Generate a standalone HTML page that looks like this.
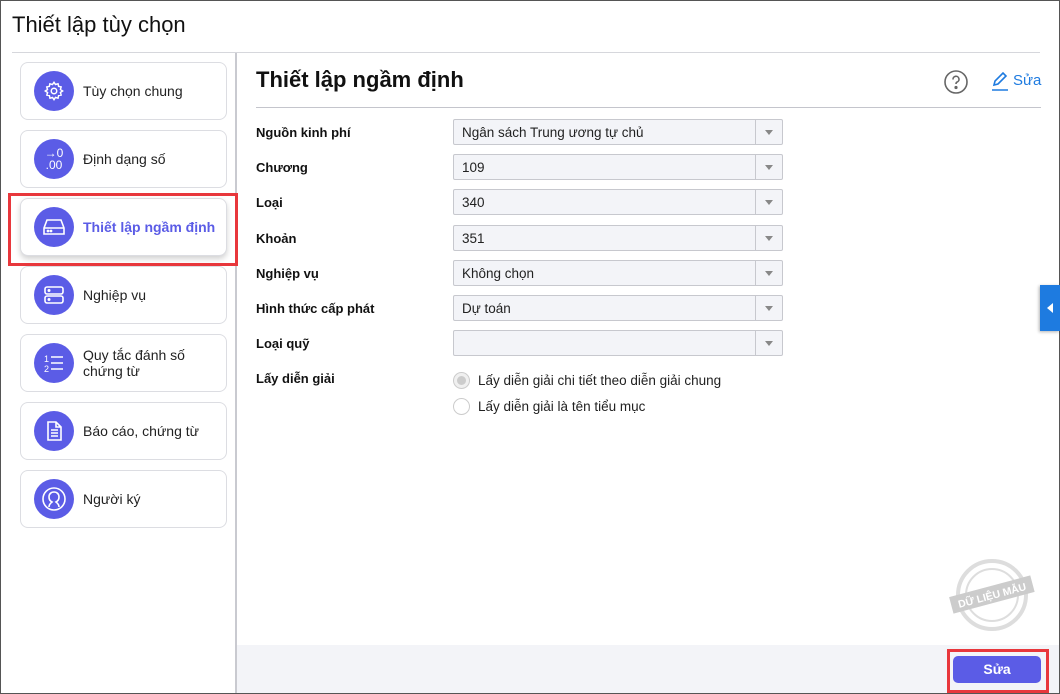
<!DOCTYPE html>
<html><head><meta charset="utf-8"><style>
*{box-sizing:border-box;margin:0;padding:0}
body{width:1060px;height:694px;overflow:hidden;background:#fff;font-family:"Liberation Sans",sans-serif;color:#111;position:relative}
.frame{position:absolute;left:0;top:0;width:1060px;height:694px;border:1px solid #555;}
.title{position:absolute;left:12px;top:12px;font-size:22px;color:#111}
.hl{position:absolute;left:12px;top:52px;width:1028px;height:1px;background:#d6d7dc}
.vl{position:absolute;left:235px;top:53px;width:2px;height:640px;background:#c9cad0}
.card{position:absolute;left:20px;width:207px;height:58px;border:1px solid #dcdde2;border-radius:8px;background:#fff;display:flex;align-items:center}
.ic{width:40px;height:40px;border-radius:50%;background:#5b5ce6;margin-left:13px;margin-right:9px;display:flex;align-items:center;justify-content:center;flex-shrink:0}
.card span{font-size:14px;color:#222;line-height:16px}
.sel{box-shadow:0 3px 6px rgba(0,0,0,.18)}
.sel span{color:#5b5ce6;font-weight:bold}
.red{position:absolute;border:3px solid #e8373c}
h1{position:absolute;left:256px;top:67px;font-size:22px;font-weight:bold}
.hl2{position:absolute;left:256px;top:107px;width:785px;height:1px;background:#c4c5cc}
.lab{position:absolute;left:256px;font-size:13px;font-weight:bold}
.sb{position:absolute;left:453px;width:330px;height:26px;border:1px solid #c7c8ce;background:#f3f4f8;border-radius:2px;font-size:13.5px;padding:5px 8px;color:#222}
.sb:after{content:"";position:absolute;right:0;top:0;width:26px;height:24px;border-left:1px solid #c7c8ce}
.sb:before{content:"";position:absolute;right:9px;top:10px;border-left:4px solid transparent;border-right:4px solid transparent;border-top:5px solid #888}
.rad{position:absolute;left:453px;width:17px;height:17px;border:1px solid #ccc;border-radius:50%;background:#fff}
.rt{position:absolute;left:478px;font-size:13.5px;color:#222}
.foot{position:absolute;left:237px;top:645px;width:822px;height:48px;background:#f3f4f8}
.btn{position:absolute;left:953px;top:656px;width:88px;height:27px;background:#5b5ce6;border-radius:5px;color:#fff;font-weight:bold;font-size:14px;text-align:center;line-height:27px}
</style></head><body>
<div class="frame"></div>
<div class="title">Thiết lập tùy chọn</div>
<div class="hl"></div>
<div class="vl"></div>

<div class="card" style="top:62px"><div class="ic"><svg width="22" height="22" viewBox="0 0 24 24" fill="none" stroke="#fff" stroke-width="1.6"><circle cx="12" cy="12" r="3"/><path d="M12 2.5l1.6 2.4 2.8-.8.6 2.8 2.8.6-.8 2.8 2.4 1.7-2.4 1.6.8 2.8-2.8.6-.6 2.8-2.8-.8L12 21.5l-1.6-2.4-2.8.8-.6-2.8-2.8-.6.8-2.8L2.5 12l2.4-1.6-.8-2.8 2.8-.6.6-2.8 2.8.8z"/></svg></div><span>Tùy chọn chung</span></div>
<div class="card" style="top:130px"><div class="ic" style="color:#fff;font-size:12px;line-height:12px;text-align:center;flex-direction:column"><div>→0</div><div>.00</div></div><span>Định dạng số</span></div>
<div class="card sel" style="top:198px"><div class="ic"><svg width="24" height="22" viewBox="0 0 24 22" fill="none" stroke="#fff" stroke-width="1.6"><path d="M5 4h14l3 8v6H2v-6z M2 12h20"/><circle cx="6" cy="15" r=".6" fill="#fff"/><circle cx="9" cy="15" r=".6" fill="#fff"/></svg></div><span>Thiết lập ngầm định</span></div>
<div class="card" style="top:266px"><div class="ic"><svg width="22" height="22" viewBox="0 0 22 22" fill="none" stroke="#fff" stroke-width="1.6"><rect x="2" y="3" width="18" height="7" rx="2"/><rect x="2" y="12" width="18" height="7" rx="2"/><circle cx="6" cy="6.5" r=".7" fill="#fff"/><circle cx="6" cy="15.5" r=".7" fill="#fff"/></svg></div><span>Nghiệp vụ</span></div>
<div class="card" style="top:334px"><div class="ic"><svg width="24" height="22" viewBox="0 0 24 22" fill="#fff" stroke="#fff"><text x="2" y="10" font-size="9" stroke="none" font-family="Liberation Sans">1</text><text x="2" y="20" font-size="9" stroke="none" font-family="Liberation Sans">2</text><path d="M9 5h12M9 11h12M9 17h12" stroke-width="1.6"/></svg></div><span>Quy tắc đánh số<br>chứng từ</span></div>
<div class="card" style="top:402px"><div class="ic"><svg width="20" height="22" viewBox="0 0 20 22" fill="none" stroke="#fff" stroke-width="1.6"><path d="M4 2h8l5 5v13H4z M12 2v5h5 M7 10h7M7 13h7M7 16h7"/></svg></div><span>Báo cáo, chứng từ</span></div>
<div class="card" style="top:470px"><div class="ic"><svg width="26" height="26" viewBox="0 0 26 26" fill="none" stroke="#fff" stroke-width="1.6"><circle cx="13" cy="13" r="11"/><path d="M8 21c0-3 2-4 3-5-2-1-3-3-3-5 0-3 2-5 5-5s5 2 5 5c0 2-1 4-3 5 1 1 3 2 3 5"/></svg></div><span>Người ký</span></div>
<div class="red" style="left:8px;top:193px;width:230px;height:73px"></div>

<h1>Thiết lập ngầm định</h1>
<svg style="position:absolute;left:944px;top:70px" width="24" height="24" viewBox="0 0 24 24" fill="none" stroke="#666" stroke-width="1.6"><circle cx="12" cy="12" r="11"/><path d="M9 9.5a3 3 0 1 1 4 2.6c-.8.4-1 .9-1 1.9"/><circle cx="12" cy="17.5" r=".8" fill="#666"/></svg>
<svg style="position:absolute;left:991px;top:71px" width="18" height="20" viewBox="0 0 18 20" fill="none" stroke="#1e7be0" stroke-width="1.6"><path d="M3 14l1-4L12 2l3 3-8 8z M1 19h16"/></svg>
<div style="position:absolute;left:1013px;top:72px;font-size:15px;color:#1e7be0">Sửa</div>
<div class="hl2"></div>

<div class="lab" style="top:125px">Nguồn kinh phí</div><div class="sb" style="top:119px">Ngân sách Trung ương tự chủ</div>
<div class="lab" style="top:160px">Chương</div><div class="sb" style="top:154px">109</div>
<div class="lab" style="top:195px">Loại</div><div class="sb" style="top:189px">340</div>
<div class="lab" style="top:231px">Khoản</div><div class="sb" style="top:225px">351</div>
<div class="lab" style="top:266px">Nghiệp vụ</div><div class="sb" style="top:260px">Không chọn</div>
<div class="lab" style="top:301px">Hình thức cấp phát</div><div class="sb" style="top:295px">Dự toán</div>
<div class="lab" style="top:336px">Loại quỹ</div><div class="sb" style="top:330px"></div>
<div class="lab" style="top:371px">Lấy diễn giải</div>
<div class="rad" style="top:372px;background:#f0f0f0"><div style="width:9px;height:9px;border-radius:50%;background:#ccc;margin:3px"></div></div>
<div class="rt" style="top:373px">Lấy diễn giải chi tiết theo diễn giải chung</div>
<div class="rad" style="top:398px"></div>
<div class="rt" style="top:399px">Lấy diễn giải là tên tiểu mục</div>

<svg style="position:absolute;left:945px;top:555px" width="90" height="80" viewBox="0 0 90 80"><circle cx="47" cy="40" r="34" fill="none" stroke="#ddd" stroke-width="4"/><circle cx="47" cy="40" r="26" fill="none" stroke="#ddd" stroke-width="2"/><g transform="rotate(-15 47 40)"><rect x="5" y="31" width="84" height="17" fill="#ccc"/><text x="47" y="44" text-anchor="middle" font-size="10.5" font-weight="bold" fill="#fff" font-family="Liberation Sans">DỮ LIỆU MẪU</text></g></svg>

<div style="position:absolute;left:1040px;top:285px;width:20px;height:46px;background:#1e7be0;box-shadow:-1px 1px 3px rgba(0,0,0,.3)"><div style="position:absolute;left:7px;top:18px;border-top:5px solid transparent;border-bottom:5px solid transparent;border-right:6px solid #fff"></div></div>

<div class="foot"></div>
<div class="btn">Sửa</div>
<div class="red" style="left:947px;top:649px;width:102px;height:44px"></div>
</body></html>
